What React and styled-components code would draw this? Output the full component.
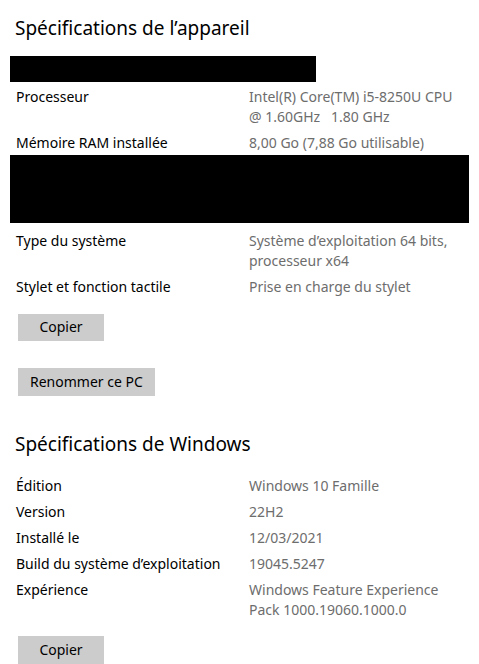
import styled, { createGlobalStyle } from 'styled-components';

const GlobalStyle = createGlobalStyle`
  body {
    margin: 0;
    background: #fff;
    font-family: 'Noto Sans', 'Open Sans', sans-serif;
  }
`;

const deviceSpecs = [
  { label: 'Processeur', value: ['Intel(R) Core(TM) i5-8250U CPU', '@ 1.60GHz   1.80 GHz'] },
  { label: 'Mémoire RAM installée', value: ['8,00 Go (7,88 Go utilisable)'] },
];

const systemSpecs = [
  { label: 'Type du système', value: ['Système d’exploitation 64 bits,', 'processeur x64'] },
  { label: 'Stylet et fonction tactile', value: ['Prise en charge du stylet'] },
];

const windowsSpecs = [
  { label: 'Édition', value: ['Windows 10 Famille'] },
  { label: 'Version', value: ['22H2'] },
  { label: 'Installé le', value: ['12/03/2021'] },
  { label: 'Build du système d’exploitation', value: ['19045.5247'] },
  { label: 'Expérience', value: ['Windows Feature Experience', 'Pack 1000.19060.1000.0'] },
];

function SpecList({ items }) {
  return (
    <List>
      {items.map((item) => (
        <Row key={item.label}>
          <Label>{item.label}</Label>
          <Value>
            {item.value.map((line) => (
              <Line key={line}>{line}</Line>
            ))}
          </Value>
        </Row>
      ))}
    </List>
  );
}

export default function App() {
  return (
    <Page>
      <GlobalStyle />
      <Title>Spécifications de l’appareil</Title>
      <Redacted $width={306} $height={26} $top={14} $bottom={5} />
      <SpecList items={deviceSpecs} />
      <Redacted $width={459} $height={69} $top={2} $bottom={8} />
      <SpecList items={systemSpecs} />
      <Button $top={17}>Copier</Button>
      <Button $top={27}>Renommer ce PC</Button>
      <Title $top={34}>Spécifications de Windows</Title>
      <Spacer $h={19} />
      <SpecList items={windowsSpecs} />
      <Button $top={16}>Copier</Button>
    </Page>
  );
}

const Page = styled.div`
  display: flex;
  flex-direction: column;
  align-items: flex-start;
  padding: 14px 0 0 16px;
  width: 479px;
  height: 664px;
  box-sizing: border-box;
  overflow: hidden;
  color: #000;
`;

const Title = styled.h2`
  margin: ${(p) => p.$top || 0}px 0 0 -1px;
  font-size: 19px;
  font-weight: 400;
  line-height: 28px;
  color: #000;
`;

const Redacted = styled.div`
  margin: ${(p) => p.$top}px 0 ${(p) => p.$bottom}px -6px;
  width: ${(p) => p.$width}px;
  height: ${(p) => p.$height}px;
  background: #000;
`;

const Spacer = styled.div`
  height: ${(p) => p.$h}px;
`;

const List = styled.div`
  display: flex;
  flex-direction: column;
  gap: 6px;
`;

const Row = styled.div`
  display: grid;
  grid-template-columns: 233px 220px;
  font-size: 14px;
  line-height: 20px;
`;

const Label = styled.div`
  color: #000;
`;

const Value = styled.div`
  color: #6d6d6d;
`;

const Line = styled.div`
  white-space: pre;
`;

const Button = styled.button`
  margin: ${(p) => p.$top}px 0 0 2px;
  min-width: 86px;
  height: 28px;
  padding: 0 12px;
  border: none;
  background: #cccccc;
  color: #000;
  font-family: 'Noto Sans', 'Open Sans', sans-serif;
  font-size: 14px;
  line-height: 20px;
`;
